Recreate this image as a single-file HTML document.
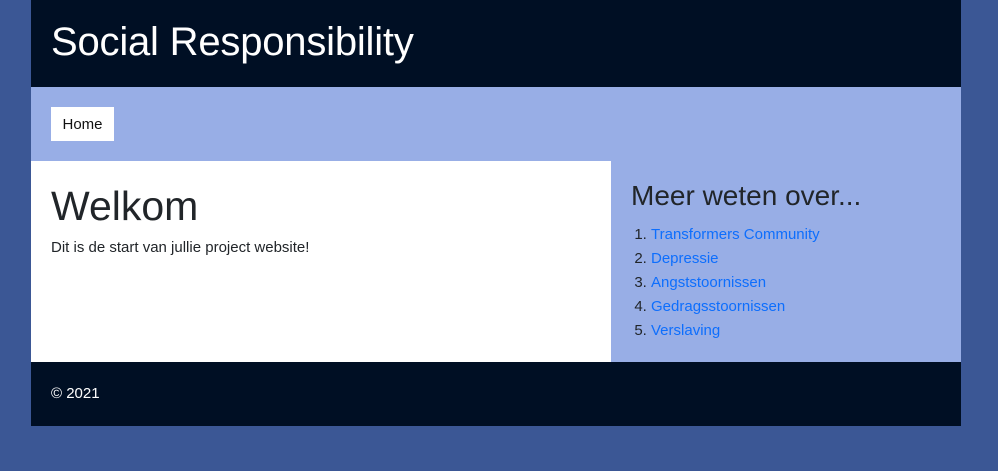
<!DOCTYPE html>
<html><head><meta charset="utf-8"><style>
*{margin:0;padding:0;box-sizing:border-box}
body{width:998px;height:471px;background:#3b5795;font-family:"Liberation Sans",sans-serif;position:relative;overflow:hidden}
.b{position:absolute}
#hd{left:31px;top:0;width:930px;height:87px;background:#000f24}
#hd h1{position:absolute;left:20px;top:20px;font-size:40px;font-weight:normal;color:#fff;letter-spacing:-0.2px}
#nav{left:31px;top:87px;width:930px;height:74px;background:#98aee6}
#home{position:absolute;left:20px;top:20px;width:63px;height:34px;background:#fff;font-size:15px;color:#111;line-height:36px;text-align:center}
#main{left:31px;top:161px;width:580px;height:201px;background:#fff}
#main h2{position:absolute;left:20px;top:22px;font-size:41px;font-weight:normal;color:#212529}
#main p{position:absolute;left:20px;top:78px;font-size:15px;color:#212529}
#side{left:611px;top:161px;width:350px;height:201px;background:#98aee6}
#side h3{position:absolute;left:20px;top:19px;font-size:28px;font-weight:normal;color:#212529}
#side ol{position:absolute;left:40px;top:62px;font-size:15px;color:#212529;line-height:24px}
#side a{color:#0d6efd;text-decoration:none}
#ft{left:31px;top:362px;width:930px;height:64px;background:#000f24}
#ft p{position:absolute;left:20px;top:23px;color:#fff;font-size:15px}
</style></head><body>
<div class="b" id="hd"><h1>Social Responsibility</h1></div>
<div class="b" id="nav"><div id="home">Home</div></div>
<div class="b" id="main"><h2>Welkom</h2><p>Dit is de start van jullie project website!</p></div>
<div class="b" id="side"><h3>Meer weten over...</h3><ol>
<li><a>Transformers Community</a></li><li><a>Depressie</a></li><li><a>Angststoornissen</a></li><li><a>Gedragsstoornissen</a></li><li><a>Verslaving</a></li></ol></div>
<div class="b" id="ft"><p>© 2021</p></div>
</body></html>
